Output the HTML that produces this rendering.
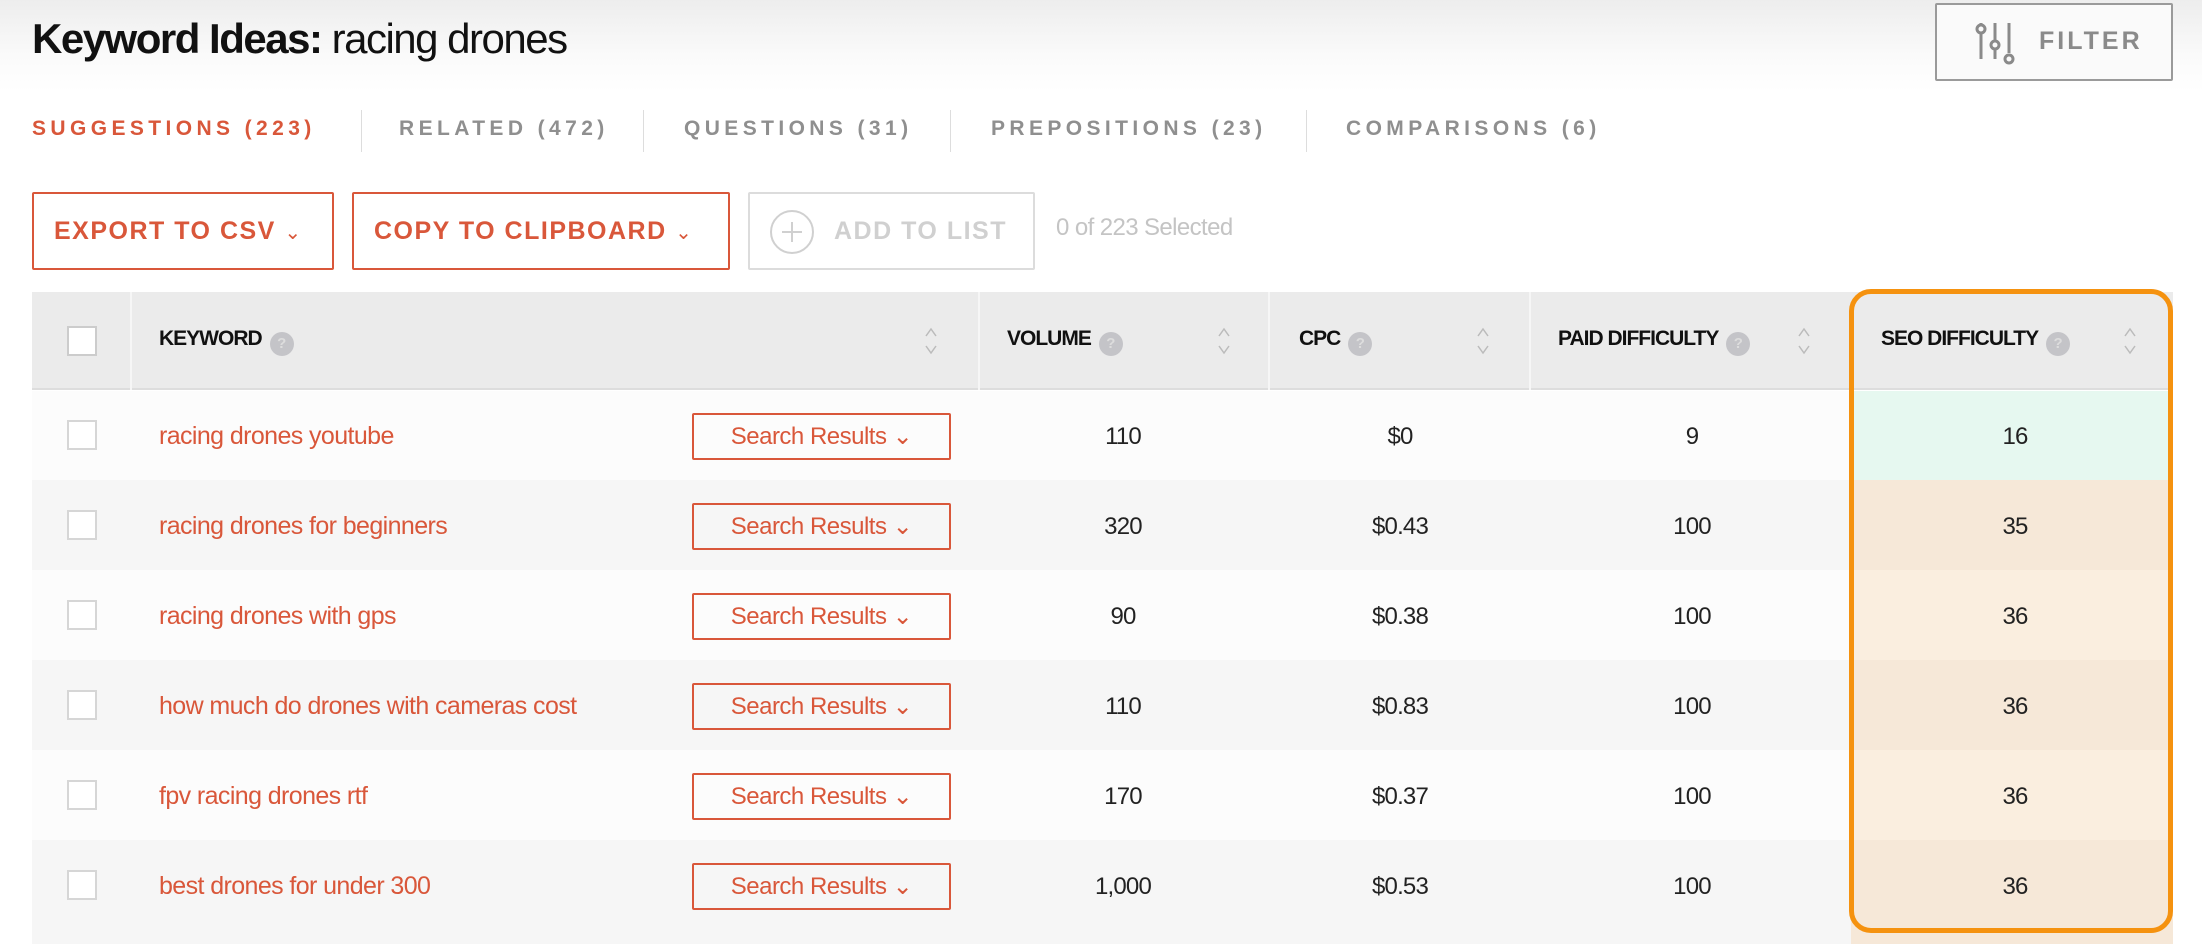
<!DOCTYPE html>
<html><head><meta charset="utf-8"><style>
*{margin:0;padding:0;box-sizing:border-box}
body{width:2202px;height:944px;background:#fff;font-family:"Liberation Sans",sans-serif;position:relative;overflow:hidden}
.a{position:absolute}
.hdr{left:0;top:0;width:2202px;height:92px;background:linear-gradient(#ededed,#fafafa 60%,#fff)}
.title{left:32px;top:15px;font-size:42px;color:#111;letter-spacing:-1.5px;white-space:nowrap}
.filter{left:1935px;top:3px;width:238px;height:78px;border:2px solid #9a9a9a;border-radius:2px;background:#fafafa}
.tab{top:117px;font-size:21px;font-weight:bold;letter-spacing:4.4px;color:#8f8f8f;white-space:nowrap}
.sep{top:110px;width:1px;height:42px;background:#ddd}
.btn{top:192px;height:78px;border:2px solid #d9573a;border-radius:2px;color:#d9573a;font-size:25px;font-weight:bold;letter-spacing:1.5px;line-height:74px;white-space:nowrap}
.th{top:292px;height:98px;background:#ebebeb;border-bottom:2px solid #ddd}
.hl{top:292px;width:2px;height:98px;background:#f6f6f6}
.ht{top:327px;font-size:21px;font-weight:bold;color:#111;letter-spacing:-1px;white-space:nowrap}
.q{display:inline-block;width:24px;height:24px;border-radius:12px;background:#c4c4c8;color:#ddd;font-size:15px;text-align:center;line-height:24px;vertical-align:-3px;margin-left:8px;letter-spacing:0}
.sort{width:14px;height:30px;top:326px}
.row{left:32px;width:2141px;height:90px}
.cb{left:67px;width:30px;height:30px;border:2px solid #d6d6d6;background:#fff}
.kw{left:159px;font-size:25px;color:#d9573a;letter-spacing:-0.6px;white-space:nowrap;margin-top:4px}
.sr{left:692px;width:259px;height:47px;border:2px solid #d9573a;border-radius:2px;color:#d9573a;font-size:24px;text-align:center;line-height:43px;letter-spacing:-0.5px}
.n{font-size:24px;color:#222;text-align:center;width:200px;letter-spacing:-0.8px;margin-top:3px}
</style></head><body>
<div class="a hdr"></div>
<div class="a title"><b>Keyword Ideas:</b> racing drones</div>
<div class="a filter">
<svg class="a" style="left:36px;top:14px" width="48" height="48" viewBox="0 0 48 48" fill="none" stroke="#8a8a8a" stroke-width="3"><line x1="8" y1="4" x2="8" y2="40"/><circle cx="8" cy="10" r="4" fill="#fafafa"/><line x1="22" y1="4" x2="22" y2="40"/><circle cx="22" cy="26" r="4" fill="#fafafa"/><line x1="36" y1="4" x2="36" y2="34"/><circle cx="36" cy="40" r="4" fill="#fafafa"/></svg>
<div class="a" style="left:102px;top:22px;font-size:25px;font-weight:bold;letter-spacing:3px;color:#8a8a8a">FILTER</div>
</div>
<div class="a tab" style="left:32px;color:#d9573a">SUGGESTIONS (223)</div>
<div class="a sep" style="left:361px"></div>
<div class="a tab" style="left:399px">RELATED (472)</div>
<div class="a sep" style="left:643px"></div>
<div class="a tab" style="left:684px">QUESTIONS (31)</div>
<div class="a sep" style="left:950px"></div>
<div class="a tab" style="left:991px">PREPOSITIONS (23)</div>
<div class="a sep" style="left:1306px"></div>
<div class="a tab" style="left:1346px">COMPARISONS (6)</div>

<div class="a btn" style="left:32px;width:302px;padding-left:20px">EXPORT TO CSV <span style="font-weight:normal;font-size:20px">&#8964;</span></div>
<div class="a btn" style="left:352px;width:378px;padding-left:20px">COPY TO CLIPBOARD <span style="font-weight:normal;font-size:20px">&#8964;</span></div>
<div class="a btn" style="left:748px;width:287px;border-color:#dcdcdc;color:#d0d0d0;padding-left:84px">ADD TO LIST</div>
<svg class="a" style="left:768px;top:208px" width="48" height="48" viewBox="0 0 48 48" fill="none" stroke="#d0d0d0" stroke-width="2"><circle cx="24" cy="24" r="21"/><line x1="24" y1="14" x2="24" y2="34"/><line x1="14" y1="24" x2="34" y2="24"/></svg>
<div class="a" style="left:1056px;top:214px;font-size:24px;color:#c4c4c4;letter-spacing:-0.6px">0 of 223 Selected</div>

<div class="a th" style="left:32px;width:2141px"></div>
<div class="a hl" style="left:130px"></div><div class="a hl" style="left:978px"></div><div class="a hl" style="left:1268px"></div><div class="a hl" style="left:1529px"></div>
<div class="a cb" style="top:326px;border-color:#ccc"></div>
<div class="a ht" style="left:159px">KEYWORD<span class="q">?</span></div>
<div class="a ht" style="left:1007px">VOLUME<span class="q">?</span></div>
<div class="a ht" style="left:1299px">CPC<span class="q">?</span></div>
<div class="a ht" style="left:1558px">PAID DIFFICULTY<span class="q">?</span></div>
<div class="a ht" style="left:1881px">SEO DIFFICULTY<span class="q">?</span></div>
<svg class="a sort" style="left:924px" viewBox="0 0 14 30" fill="none" stroke="#bbb" stroke-width="1.5"><path d="M2 10L7 3L12 10M2 20L7 27L12 20"/></svg>
<svg class="a sort" style="left:1217px" viewBox="0 0 14 30" fill="none" stroke="#bbb" stroke-width="1.5"><path d="M2 10L7 3L12 10M2 20L7 27L12 20"/></svg>
<svg class="a sort" style="left:1476px" viewBox="0 0 14 30" fill="none" stroke="#bbb" stroke-width="1.5"><path d="M2 10L7 3L12 10M2 20L7 27L12 20"/></svg>
<svg class="a sort" style="left:1797px" viewBox="0 0 14 30" fill="none" stroke="#bbb" stroke-width="1.5"><path d="M2 10L7 3L12 10M2 20L7 27L12 20"/></svg>
<svg class="a sort" style="left:2123px" viewBox="0 0 14 30" fill="none" stroke="#bbb" stroke-width="1.5"><path d="M2 10L7 3L12 10M2 20L7 27L12 20"/></svg>

<div class="a row" style="top:391px;background:#fcfcfc"></div>
<div class="a row" style="top:480px;background:#f6f6f6"></div>
<div class="a row" style="top:570px;background:#fcfcfc"></div>
<div class="a row" style="top:660px;background:#f6f6f6"></div>
<div class="a row" style="top:750px;background:#fcfcfc"></div>
<div class="a row" style="top:840px;background:#f6f6f6;height:104px"></div>
<div class="a" style="left:1851px;top:391px;width:322px;height:89px;background:#e6f8f0"></div>
<div class="a" style="left:1851px;top:480px;width:322px;height:90px;background:#f6e8d8"></div>
<div class="a" style="left:1851px;top:570px;width:322px;height:90px;background:#faeedf"></div>
<div class="a" style="left:1851px;top:660px;width:322px;height:90px;background:#f6e8d8"></div>
<div class="a" style="left:1851px;top:750px;width:322px;height:90px;background:#faeedf"></div>
<div class="a" style="left:1851px;top:840px;width:322px;height:104px;background:#f6e8d8"></div>
<div class="a" style="left:1849px;top:289px;width:324px;height:644px;border:5px solid #f5920f;border-radius:22px"></div>

<div class="a cb" style="top:420px"></div><div class="a kw" style="top:418px">racing drones youtube</div><div class="a sr" style="top:413px">Search Results &#8964;</div>
<div class="a n" style="left:1023px;top:420px">110</div><div class="a n" style="left:1300px;top:420px">$0</div><div class="a n" style="left:1592px;top:420px">9</div><div class="a n" style="left:1915px;top:420px">16</div>
<div class="a cb" style="top:510px"></div><div class="a kw" style="top:508px">racing drones for beginners</div><div class="a sr" style="top:503px">Search Results &#8964;</div>
<div class="a n" style="left:1023px;top:510px">320</div><div class="a n" style="left:1300px;top:510px">$0.43</div><div class="a n" style="left:1592px;top:510px">100</div><div class="a n" style="left:1915px;top:510px">35</div>
<div class="a cb" style="top:600px"></div><div class="a kw" style="top:598px">racing drones with gps</div><div class="a sr" style="top:593px">Search Results &#8964;</div>
<div class="a n" style="left:1023px;top:600px">90</div><div class="a n" style="left:1300px;top:600px">$0.38</div><div class="a n" style="left:1592px;top:600px">100</div><div class="a n" style="left:1915px;top:600px">36</div>
<div class="a cb" style="top:690px"></div><div class="a kw" style="top:688px">how much do drones with cameras cost</div><div class="a sr" style="top:683px">Search Results &#8964;</div>
<div class="a n" style="left:1023px;top:690px">110</div><div class="a n" style="left:1300px;top:690px">$0.83</div><div class="a n" style="left:1592px;top:690px">100</div><div class="a n" style="left:1915px;top:690px">36</div>
<div class="a cb" style="top:780px"></div><div class="a kw" style="top:778px">fpv racing drones rtf</div><div class="a sr" style="top:773px">Search Results &#8964;</div>
<div class="a n" style="left:1023px;top:780px">170</div><div class="a n" style="left:1300px;top:780px">$0.37</div><div class="a n" style="left:1592px;top:780px">100</div><div class="a n" style="left:1915px;top:780px">36</div>
<div class="a cb" style="top:870px"></div><div class="a kw" style="top:868px">best drones for under 300</div><div class="a sr" style="top:863px">Search Results &#8964;</div>
<div class="a n" style="left:1023px;top:870px">1,000</div><div class="a n" style="left:1300px;top:870px">$0.53</div><div class="a n" style="left:1592px;top:870px">100</div><div class="a n" style="left:1915px;top:870px">36</div>
</body></html>
